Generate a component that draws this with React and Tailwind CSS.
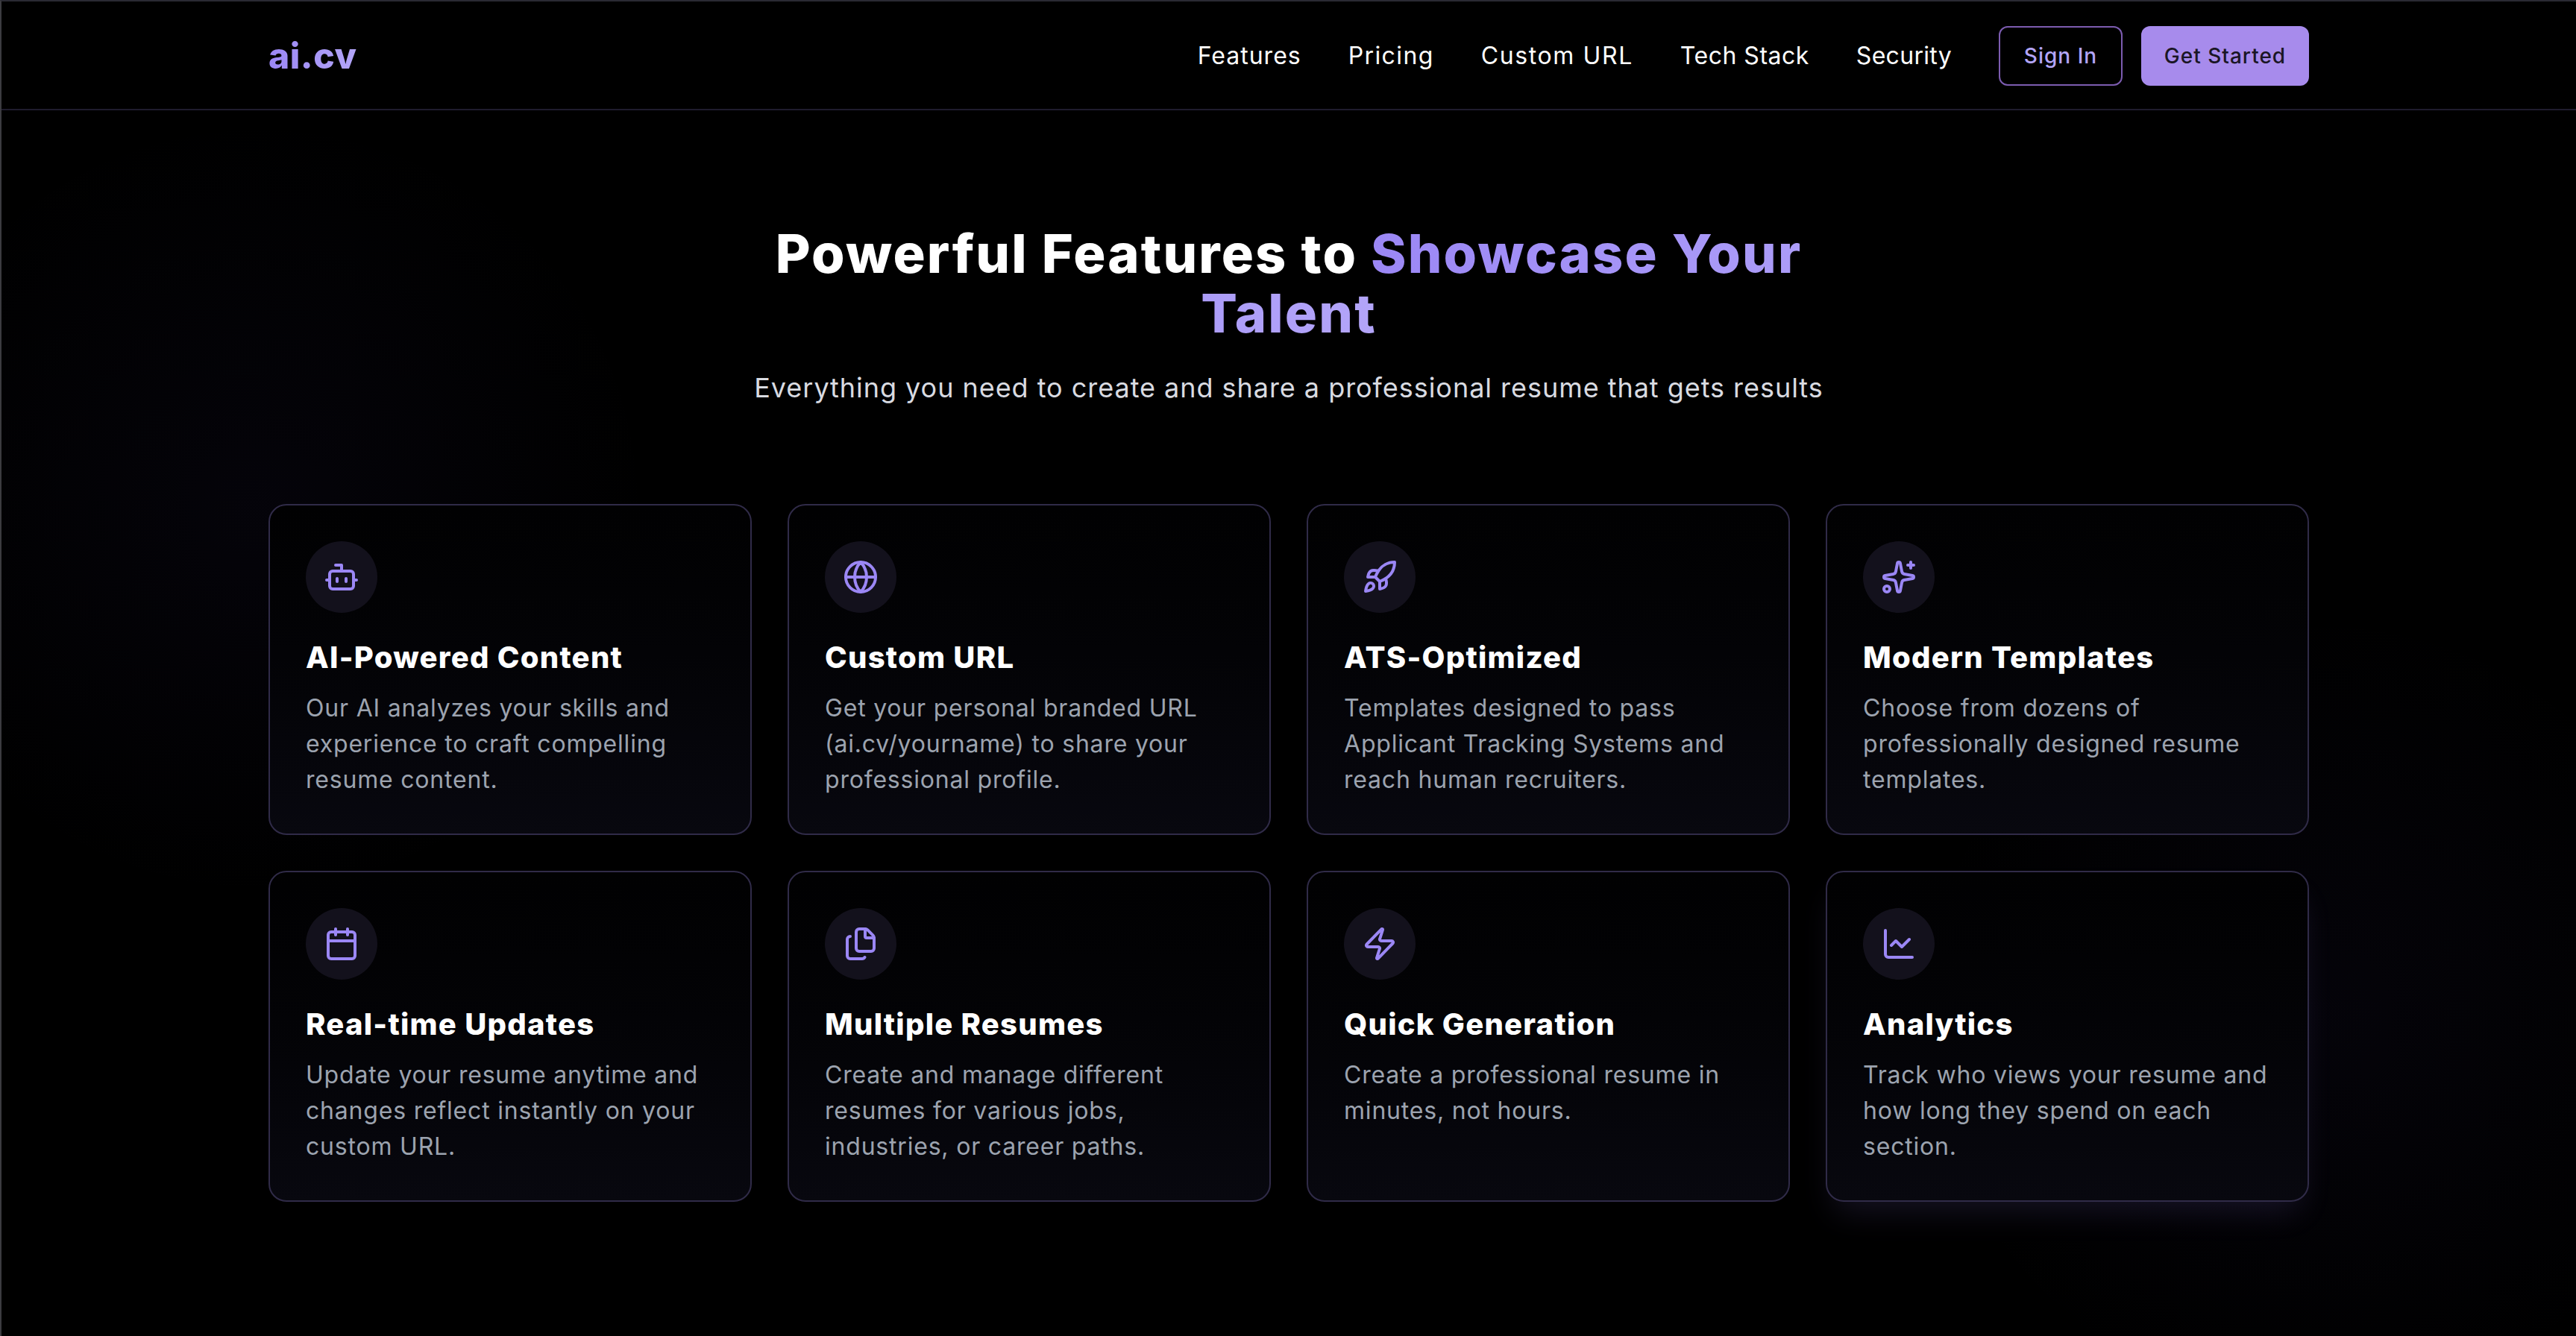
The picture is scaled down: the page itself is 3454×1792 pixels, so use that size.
import { Bot, Globe, Rocket, Sparkles, Calendar, Files, Zap, ChartLine } from 'lucide-react';

const FEATURES = [
  { icon: Bot, title: 'AI-Powered Content', text: ['Our AI analyzes your skills and', 'experience to craft compelling', 'resume content.'] },
  { icon: Globe, title: 'Custom URL', text: ['Get your personal branded URL', '(ai.cv/yourname) to share your', 'professional profile.'] },
  { icon: Rocket, title: 'ATS-Optimized', text: ['Templates designed to pass', 'Applicant Tracking Systems and', 'reach human recruiters.'] },
  { icon: Sparkles, title: 'Modern Templates', text: ['Choose from dozens of', 'professionally designed resume', 'templates.'] },
  { icon: Calendar, title: 'Real-time Updates', text: ['Update your resume anytime and', 'changes reflect instantly on your', 'custom URL.'] },
  { icon: Files, title: 'Multiple Resumes', text: ['Create and manage different', 'resumes for various jobs,', 'industries, or career paths.'] },
  { icon: Zap, title: 'Quick Generation', text: ['Create a professional resume in', 'minutes, not hours.'] },
  { icon: ChartLine, title: 'Analytics', text: ['Track who views your resume and', 'how long they spend on each', 'section.'], glow: true },
];

const NAV_LINKS = [
  { label: 'Features', className: 'tracking-[1px]' },
  { label: 'Pricing', className: 'tracking-[1.4px]' },
  { label: 'Custom URL', className: 'tracking-[1.6px]' },
  { label: 'Tech Stack', className: 'tracking-[0.5px]' },
  { label: 'Security', className: 'tracking-[0.3px]' },
];

function FeatureCard({ icon: Icon, title, text, glow }) {
  return (
    <div
      className={`rounded-3xl border-2 border-[#302b48] bg-gradient-to-b from-[#010102] to-[#08080f] p-12 ${
        glow ? 'shadow-[0_24px_44px_-12px_rgba(155,135,245,0.14)]' : ''
      }`}
    >
      <div className="flex h-24 w-24 items-center justify-center rounded-full bg-[#13111c]">
        <Icon size={48} strokeWidth={2} className="text-[#9b87f5]" />
      </div>
      <h3 className="mt-8 text-[40px] leading-[56px] font-extrabold tracking-[1.25px] text-white">{title}</h3>
      <p className="mt-4 text-[32px] leading-[48px] tracking-[0.8px] text-[#9ca3af]">
        {text.map((line) => (
          <span key={line} className="block whitespace-nowrap">{line}</span>
        ))}
      </p>
    </div>
  );
}

export default function App() {
  return (
    <div
      className="min-h-screen border-t-2 border-l-2 border-t-[#2a2a33] border-l-[#3c3c40] bg-black bg-[radial-gradient(circle_at_10%_38%,rgba(90,70,190,0.05),transparent_16%),radial-gradient(circle_at_90%_76%,rgba(90,70,190,0.05),transparent_16%)]"
      style={{ fontFamily: 'Inter, "Noto Sans", sans-serif' }}
    >
      <nav className="border-b-2 border-[#1f1c2e]">
        <div className="mx-auto flex h-[144px] max-w-[2736px] items-center justify-between pt-[2px]">
          <span className="bg-gradient-to-r from-[#9b87f5] to-[#b3a5f9] bg-clip-text text-[48px] leading-[64px] font-extrabold tracking-[0.5px] text-transparent">
            ai.cv
          </span>
          <div className="flex items-center gap-[63px]">
            {NAV_LINKS.map((link) => (
              <a key={link.label} className={`text-[32px] leading-[48px] text-white ${link.className}`}>
                {link.label}
              </a>
            ))}
            <div className="flex items-center gap-[25px]">
              <button className="h-20 w-[166px] rounded-xl border-2 border-[#7c5cb0] text-[28px] font-medium tracking-[1px] text-[#b3a5f9]">
                Sign In
              </button>
              <button className="h-20 w-[225px] rounded-xl bg-[#a78bec] text-[28px] font-medium tracking-[1px] text-[#1a1625]">
                Get Started
              </button>
            </div>
          </div>
        </div>
      </nav>

      <section className="mx-auto max-w-[2736px] pt-[152px] pb-[180px]">
        <div className="text-center">
          <h1 className="text-[72px] leading-[80px] font-extrabold tracking-[2.15px] text-white">
            Powerful Features to{' '}
            <span className="bg-gradient-to-r from-[#9b87f5] to-[#b3a5f9] bg-clip-text text-transparent">
              Showcase Your
              <br />
              Talent
            </span>
          </h1>
          <p className="mt-8 text-[36px] leading-[56px] tracking-[0.96px] text-[#d9dbe1]">
            Everything you need to create and share a professional resume that gets results
          </p>
        </div>
        <div className="mt-32 grid grid-cols-4 gap-12">
          {FEATURES.map((feature) => (
            <FeatureCard key={feature.title} {...feature} />
          ))}
        </div>
      </section>
    </div>
  );
}
